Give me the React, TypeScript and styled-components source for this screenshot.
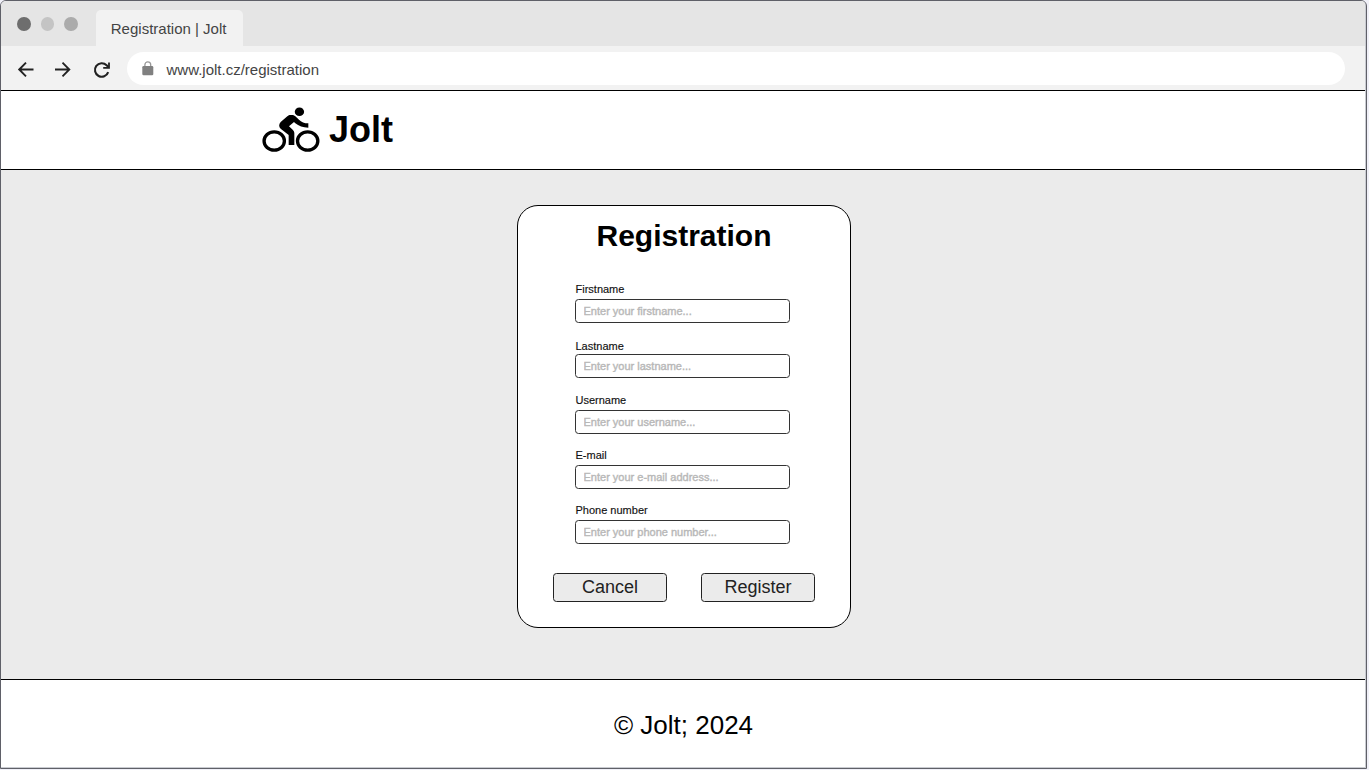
import React from 'react';
import styled, { createGlobalStyle } from 'styled-components';

const GlobalStyle = createGlobalStyle`
  *, *::before, *::after { box-sizing: border-box; }
  body {
    margin: 0;
    background: #f0f0f8;
    font-family: "Liberation Sans", Arial, sans-serif;
    color: #000;
  }
`;

const Window = styled.div`
  display: flex;
  flex-direction: column;
  width: 1367px;
  height: 769px;
  overflow: hidden;
  background: #fff;
  border: 1px solid #5f6068;
  border-radius: 6px 6px 0 0;
  box-shadow: inset -1px -1px 0 #c9cbd1;
`;

const TabBar = styled.div`
  display: flex;
  align-items: flex-end;
  flex: 0 0 45px;
  margin-right: 1px;
  padding-left: 16px;
  background: #e5e5e5;
`;

const WindowDots = styled.div`
  display: flex;
  gap: 10px;
  padding-bottom: 15px;
`;

const Dot = styled.span<{ $color: string }>`
  width: 13.6px;
  height: 14px;
  border-radius: 50%;
  background: ${(p) => p.$color};
`;

const Tab = styled.div`
  width: 147.5px;
  height: 36px;
  margin-left: 18px;
  padding-left: 15px;
  border-radius: 5px 5px 0 0;
  background: #f2f2f2;
  color: #444;
  font-size: 15px;
  line-height: 37px;
  white-space: nowrap;
`;

const Toolbar = styled.div`
  display: flex;
  align-items: center;
  flex: 0 0 45px;
  margin-right: 1px;
  padding: 1px 20px 0 16px;
  border-bottom: 1px solid #000;
  background: #f2f2f2;
`;

const NavIcons = styled.div`
  display: flex;
  align-items: center;
  gap: 19px;
  width: 109.5px;
  padding-top: 2px;

  svg { display: block; }
`;

const AddressBar = styled.div`
  display: flex;
  align-items: center;
  flex: 1;
  height: 33px;
  padding: 2px 0 0 15px;
  border-radius: 17px;
  background: #fff;
  color: #444;
  font-size: 15px;

  svg { margin: -2px 13px 0 0; }
`;

const Header = styled.header`
  display: flex;
  align-items: center;
  flex: 0 0 79px;
  gap: 9px;
  margin-right: 1px;
  padding-left: 261px;
  border-bottom: 1px solid #000;
`;

const Brand = styled.span`
  font-size: 36px;
  font-weight: 700;
  line-height: 40px;
`;

const Main = styled.main`
  display: flex;
  justify-content: center;
  align-items: flex-start;
  flex: 0 0 510px;
  margin-right: 1px;
  padding: 35px 0 0 1px;
  border-bottom: 1px solid #000;
  background: #ebebeb;
`;

const Card = styled.form`
  width: 334px;
  height: 423px;
  padding: 11px 35px 0;
  border: 1px solid #000;
  border-radius: 21px;
  background: #fff;
`;

const Title = styled.h1`
  margin: 0 0 28px;
  padding-left: 1px;
  font-size: 30px;
  line-height: 38px;
  text-align: center;
`;

const Fields = styled.div`
  display: flex;
  flex-direction: column;
  padding: 0 24px 0 22px;
`;

const Field = styled.label<{ $gap: number; $before: number }>`
  display: flex;
  flex-direction: column;
  gap: ${(p) => p.$gap}px;
  margin-top: ${(p) => p.$before}px;
  font-size: 11px;
  line-height: 13px;
  color: #111;
`;

const LabelText = styled.span`
  padding-left: 1px;
  -webkit-text-stroke: 0.15px #111;
`;

const Input = styled.input`
  width: 215.4px;
  height: 24px;
  padding: 0 8px;
  border: 1px solid #333;
  border-radius: 3.5px;
  background: #fff;
  font: 11px "Liberation Sans", Arial, sans-serif;
  outline: none;

  &::placeholder {
    color: #b8b8b8;
    opacity: 1;
    -webkit-text-stroke: 0.4px #b8b8b8;
  }
`;

const Actions = styled.div`
  display: flex;
  justify-content: space-between;
  margin-top: 29px;
`;

const Button = styled.button`
  width: 114px;
  height: 29px;
  padding: 0 0 1px 1px;
  border: 1px solid #222;
  border-radius: 3.5px;
  background: #ebebeb;
  color: #222;
  font: 18px "Liberation Sans", Arial, sans-serif;
`;

const Footer = styled.footer`
  flex: 1;
  padding-top: 30px;
  font-size: 26px;
  line-height: 30px;
  text-align: center;
`;

const dots = ['#6e6e6e', '#c4c4c4', '#ababab'];

const fields = [
  { label: 'Firstname', hint: 'Enter your firstname...', gap: 3, before: 0 },
  { label: 'Lastname', hint: 'Enter your lastname...', gap: 1, before: 17 },
  { label: 'Username', hint: 'Enter your username...', gap: 3, before: 16 },
  { label: 'E-mail', hint: 'Enter your e-mail address...', gap: 3, before: 15 },
  { label: 'Phone number', hint: 'Enter your phone number...', gap: 3, before: 15 },
];

const stroke = { fill: 'none', stroke: '#222', strokeWidth: 1.9 };

const BackIcon = () => (
  <svg width="18" height="18" viewBox="0 0 18 18" {...stroke}>
    <path d="M16.5 8.5H2.5M9 1.7 2.2 8.5 9 15.3" />
  </svg>
);

const ForwardIcon = () => (
  <svg width="18" height="18" viewBox="0 0 18 18" {...stroke}>
    <path d="M1 8.5h14M8.5 1.7 15.3 8.5l-6.8 6.8" />
  </svg>
);

const ReloadIcon = () => (
  <svg width="20" height="18" viewBox="0 0 20 18" {...stroke} strokeWidth={2.1}>
    <path d="M17.2 11.2A6.8 6.8 0 1 1 15.6 4.2L17.4 6" />
    <path d="M18 1.6v5.2h-5.8" strokeWidth={1.8} />
  </svg>
);

const LockIcon = () => (
  <svg width="12" height="15" viewBox="0 0 12 15">
    <path d="M2.9 6V3.8a2.9 2.9 0 0 1 5.8 0V6" fill="none" stroke="#999" strokeWidth="1.3" />
    <rect x="0.3" y="5" width="11" height="9.3" rx="1.3" fill="#808080" />
  </svg>
);

const CyclistIcon = () => (
  <svg width="58" height="45.33" viewBox="36 52 174 136">
    <g fill="none" stroke="#000" strokeWidth="10">
      <ellipse cx="72.7" cy="154" rx="30.5" ry="27.5" />
      <ellipse cx="173" cy="154" rx="30.5" ry="27.5" />
    </g>
    <ellipse cx="148.3" cy="66" rx="14" ry="12.8" />
    <path d="M121 76c6-1 11 0 15 4l11 10c7 7 16 11 28 11v13c-16 0-29-5-39-13l-4-4-15 13 11 10c4 4 5 7 5 11v35h-17v-30L92 117c-6-5-6-14 0-20l20-17c3-3 6-4 9-4z" />
  </svg>
);

export default function App() {
  return (
    <>
      <GlobalStyle />
      <Window>
        <TabBar>
          <WindowDots>
            {dots.map((c) => (
              <Dot key={c} $color={c} />
            ))}
          </WindowDots>
          <Tab>Registration | Jolt</Tab>
        </TabBar>
        <Toolbar>
          <NavIcons>
            <BackIcon />
            <ForwardIcon />
            <ReloadIcon />
          </NavIcons>
          <AddressBar>
            <LockIcon />
            www.jolt.cz/registration
          </AddressBar>
        </Toolbar>
        <Header>
          <CyclistIcon />
          <Brand>Jolt</Brand>
        </Header>
        <Main>
          <Card>
            <Title>Registration</Title>
            <Fields>
              {fields.map((f) => (
                <Field key={f.label} $gap={f.gap} $before={f.before}>
                  <LabelText>{f.label}</LabelText>
                  <Input placeholder={f.hint} />
                </Field>
              ))}
            </Fields>
            <Actions>
              <Button type="button">Cancel</Button>
              <Button type="button">Register</Button>
            </Actions>
          </Card>
        </Main>
        <Footer>© Jolt; 2024</Footer>
      </Window>
    </>
  );
}
